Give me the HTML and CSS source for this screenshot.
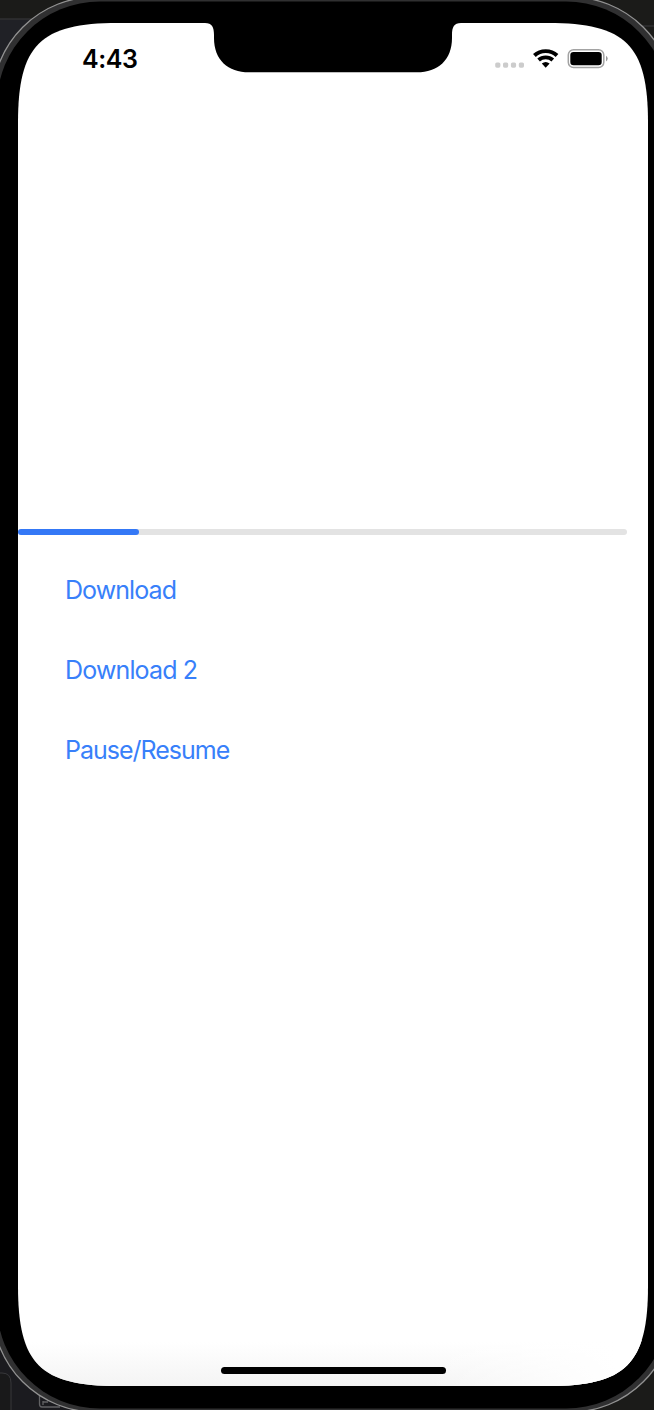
FILE: index.html
```html
<!DOCTYPE html>
<html lang="en">
<head>
<meta charset="utf-8">
<title>Download</title>
<link rel="stylesheet" href="styles.css">
</head>
<body>
<main class="phone">
  <svg class="frame" viewBox="0 0 654 1410" aria-hidden="true">
    <defs>
      <linearGradient id="shade" x1="0" y1="0" x2="0" y2="1"><stop offset="0" stop-color="#f4f4f4" stop-opacity="0"/><stop offset="1" stop-color="#f4f4f4"/></linearGradient>
      <linearGradient id="fade" x1="0" y1="0" x2="1" y2="0"><stop offset=".65" stop-color="#fff" stop-opacity="0"/><stop offset=".95" stop-color="#fff"/></linearGradient>
      <clipPath id="screen"><path d="M118 23H548C626 23 648 45 648 123V1286C648 1364 626 1386 548 1386H118C40 1386 18 1364 18 1286V123C18 45 40 23 118 23Z"/></clipPath>
    </defs>
    <path fill="#1b1b19" d="M0 0H654V1410H0Z"/>
    <path fill="#202126" d="M0 19H100V200H0Z"/>
    <path fill="#1b1b1f" d="M0 1300H200V1410H0Z"/>
    <path stroke="#303032" stroke-width="1.5" d="M0 19H40M640 26H654"/>
    <path fill="#19191a" stroke="#38383b" d="M-5 1373H2Q11 1373 11 1383V1411H-5Z"/>
    <path fill="none" stroke="#626264" stroke-width="1.3" d="M39.500 1396V1404Q39.500 1407 42 1407H60M43 1401V1405M43 1402H48"/>
    <rect x="-7.500" y="-3" width="681" height="1415" rx="103" fill="#303031" stroke="#929292" stroke-width="1.300"/>
    <rect x="-3" y="1.500" width="672" height="1407" rx="103" fill="#000"/>
    <g clip-path="url(#screen)">
      <path fill="#fff" d="M18 23H648V1386H18Z"/>
      <path fill="url(#shade)" d="M18 1342H648V1386H18Z"/>
      <path fill="url(#fade)" d="M18 1340H648V1386H18Z"/>
    </g>
    <path d="M205 22V23C212 23 214 27 214 35V38C214 60 228 72.300 249 72.300H417C438 72.300 452 60 452 38V35C452 27 454 23 461 23V22Z"/>
  </svg>
  <header class="status">
    <time class="time">4:43</time>
    <svg class="indicators" viewBox="0 0 120 28" aria-hidden="true">
      <g fill="#ccc"><rect x="5.200" y="17.500" width="5.200" height="5.200" rx="1.600"/><rect x="13" y="17.500" width="5.200" height="5.200" rx="1.600"/><rect x="20.900" y="17.500" width="5.200" height="5.200" rx="1.600"/><rect x="28.800" y="17.500" width="5.200" height="5.200" rx="1.600"/></g>
      <path fill="none" stroke="#000" stroke-width="3.900" d="M44.400 10.500C50.500 4.600 60.900 4.600 67 10.500M48.600 15C52.500 11.500 58.900 11.500 62.800 15"/>
      <path d="M51.800 18.600Q55.700 15.200 59.600 18.600L55.700 22.700Z"/>
      <rect x="78.300" y="4.700" width="35.500" height="17.800" rx="5.300" fill="#fff" stroke="#a3a3a3" stroke-width="1.500"/>
      <rect x="80.300" y="6.900" width="31.400" height="13.400" rx="3.200"/>
      <path fill="#999" d="M116 10.700Q117.700 11.700 117.700 13.600Q117.700 15.500 116 16.500Z"/>
    </svg>
  </header>
  <section class="content">
    <div class="track"><div class="progress"></div></div>
    <div class="actions">
      <button class="action">Download</button>
      <button class="action second">Download 2</button>
      <button class="action third">Pause/Resume</button>
    </div>
  </section>
  <footer class="footer"><div class="home"></div></footer>
</main>
</body>
</html>
```
FILE: styles.css
```css
* { box-sizing: border-box; }
body { margin: 0; background: #000; overflow: hidden; }
.phone { position: relative; isolation: isolate; display: flex; flex-direction: column; width: 654px; height: 1410px; padding: 45px 6px 36px 18px; font-family: Inter, "Liberation Sans", sans-serif; }
.frame { position: absolute; inset: 0; width: 654px; height: 1410px; z-index: -1; }
.status { display: flex; justify-content: space-between; height: 28px; padding: 0 38px 0 64px; }
.time { font-size: 25px; line-height: 28px; font-weight: 600; letter-spacing: -.4px; }
.indicators { width: 120px; height: 28px; }
.content { flex: 1; padding-top: 456px; }
.track { width: 609px; height: 6px; border-radius: 3px; background: #e3e3e3; }
.progress { width: 121px; height: 6px; border-radius: 3px; background: #3478f6; }
.actions { display: flex; flex-direction: column; align-items: flex-start; gap: 40px; padding: 35px 0 0 47px; }
.action { padding: 0; border: 0; background: none; color: #3880fa; font: 400 25px/40px Inter, "Liberation Sans", sans-serif; letter-spacing: -.93px; }
.second { letter-spacing: -.85px; }
.third { letter-spacing: -1px; }
.footer { display: flex; justify-content: center; }
.home { width: 225px; height: 7px; border-radius: 4px; background: #000; }
```
